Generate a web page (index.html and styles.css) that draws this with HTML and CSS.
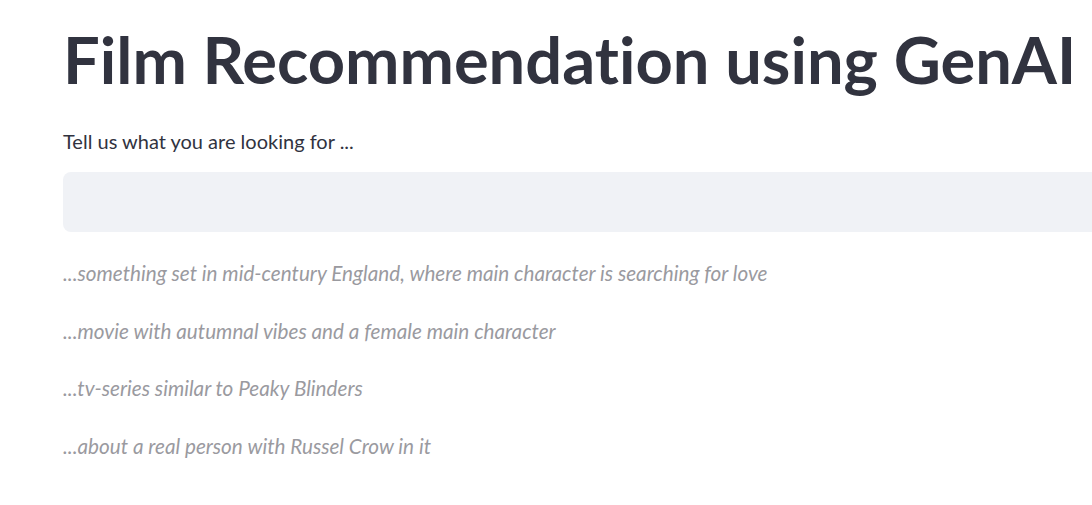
FILE: index.html
```html
<!DOCTYPE html>
<html lang="en">
<head>
  <meta charset="UTF-8" />
  <meta name="viewport" content="width=device-width, initial-scale=1.0"/>
  <title>Film Recommendation using GenAI</title>
  <link rel="stylesheet" href="styles.css">
</head>
<body>

<div class="main">
  <h1 class="title">Film Recommendation using GenAI</h1>

  <label class="prompt-label" for="prompt">Tell us what you are looking for ...</label>
  <input type="text" id="prompt" class="prompt-input" />

  <div class="examples">
    <p>...something set in mid-century England, where main character is searching for love</p>
    <p>...movie with autumnal vibes and a female main character</p>
    <p>...tv-series similar to Peaky Blinders</p>
    <p>...about a real person with Russel Crow in it</p>
  </div>
</div>

</body>
</html>
```

FILE: styles.css
```css
html, body {
  margin: 0;
  padding: 0;
  background: #ffffff;
  overflow: hidden;
}
body {
  font-family: 'Lato', 'Open Sans', sans-serif;
  color: #31333f;
  font-variant-ligatures: none;
}
.main {
  box-sizing: border-box;
  width: 100%;
  padding: 20px 0 0 63px;
}
.title {
  margin: 0;
  font-size: 65px;
  font-weight: 700;
  line-height: 1.2;
  color: #31333f;
  white-space: nowrap;
}
.prompt-label {
  display: block;
  margin-top: 28px;
  font-size: 20px;
  line-height: 30px;
}
.prompt-input {
  display: block;
  box-sizing: border-box;
  width: 100%;
  height: 60px;
  margin-top: 16px;
  border: none;
  border-radius: 8px 0 0 8px;
  background: #f0f2f6;
  font-family: inherit;
  font-size: 20px;
  outline: none;
}
.examples {
  margin-top: 26px;
}
.examples p {
  margin: 0 0 27.5px 0;
  font-size: 20.7px;
  line-height: 30px;
  font-style: italic;
  color: #9a9a9f;
}
```
